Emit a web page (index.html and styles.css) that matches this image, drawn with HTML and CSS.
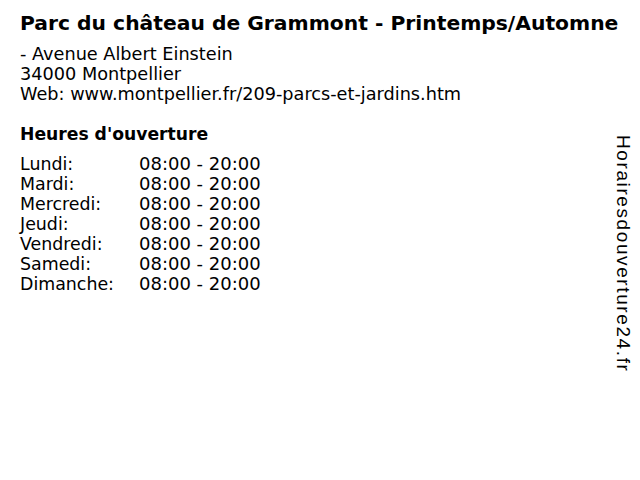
FILE: index.html
```html
<!DOCTYPE html>
<html lang="fr">
<head>
<meta charset="utf-8">
<link rel="stylesheet" href="styles.css">
</head>
<body>
<div class="page">
  <h1 class="title">Parc du château de Grammont - Printemps/Automne</h1>
  <div class="address">
    <div>- Avenue Albert Einstein</div>
    <div>34000 Montpellier</div>
    <div>Web: www.montpellier.fr/209-parcs-et-jardins.htm</div>
  </div>
  <h2 class="subtitle">Heures d'ouverture</h2>
  <div class="hours">
    <span class="day">Lundi:</span><span class="time">08:00 - 20:00</span>
    <span class="day">Mardi:</span><span class="time">08:00 - 20:00</span>
    <span class="day">Mercredi:</span><span class="time">08:00 - 20:00</span>
    <span class="day">Jeudi:</span><span class="time">08:00 - 20:00</span>
    <span class="day">Vendredi:</span><span class="time">08:00 - 20:00</span>
    <span class="day">Samedi:</span><span class="time">08:00 - 20:00</span>
    <span class="day">Dimanche:</span><span class="time">08:00 - 20:00</span>
  </div>
</div>
<div class="brand">Horairesdouverture24.fr</div>
</body>
</html>
```
FILE: styles.css
```css
html, body {
  margin: 0;
  padding: 0;
  background: #fff;
}
body {
  width: 640px;
  height: 480px;
  position: relative;
  overflow: hidden;
  color: #000;
  font-family: "DejaVu Sans", Verdana, sans-serif;
}
.page {
  padding: 10px 0 0 20px;
}
.title {
  margin: 0;
  font-size: 20.3px;
  font-weight: bold;
  line-height: 26px;
}
.address {
  margin-top: 8px;
  font-size: 17.7px;
  line-height: 20px;
}
.subtitle {
  margin: 20px 0 0;
  font-size: 17.2px;
  font-weight: bold;
  line-height: 20px;
}
.hours {
  margin-top: 10px;
  display: grid;
  grid-template-columns: 119px auto;
  font-size: 18px;
  line-height: 20px;
}
.day {
  font-size: 17.4px;
}
.brand {
  position: absolute;
  top: 135px;
  left: 612px;
  writing-mode: vertical-rl;
  font-family: "Liberation Sans", Arial, sans-serif;
  font-size: 19px;
  letter-spacing: 1.6px;
  line-height: 22px;
}
```
